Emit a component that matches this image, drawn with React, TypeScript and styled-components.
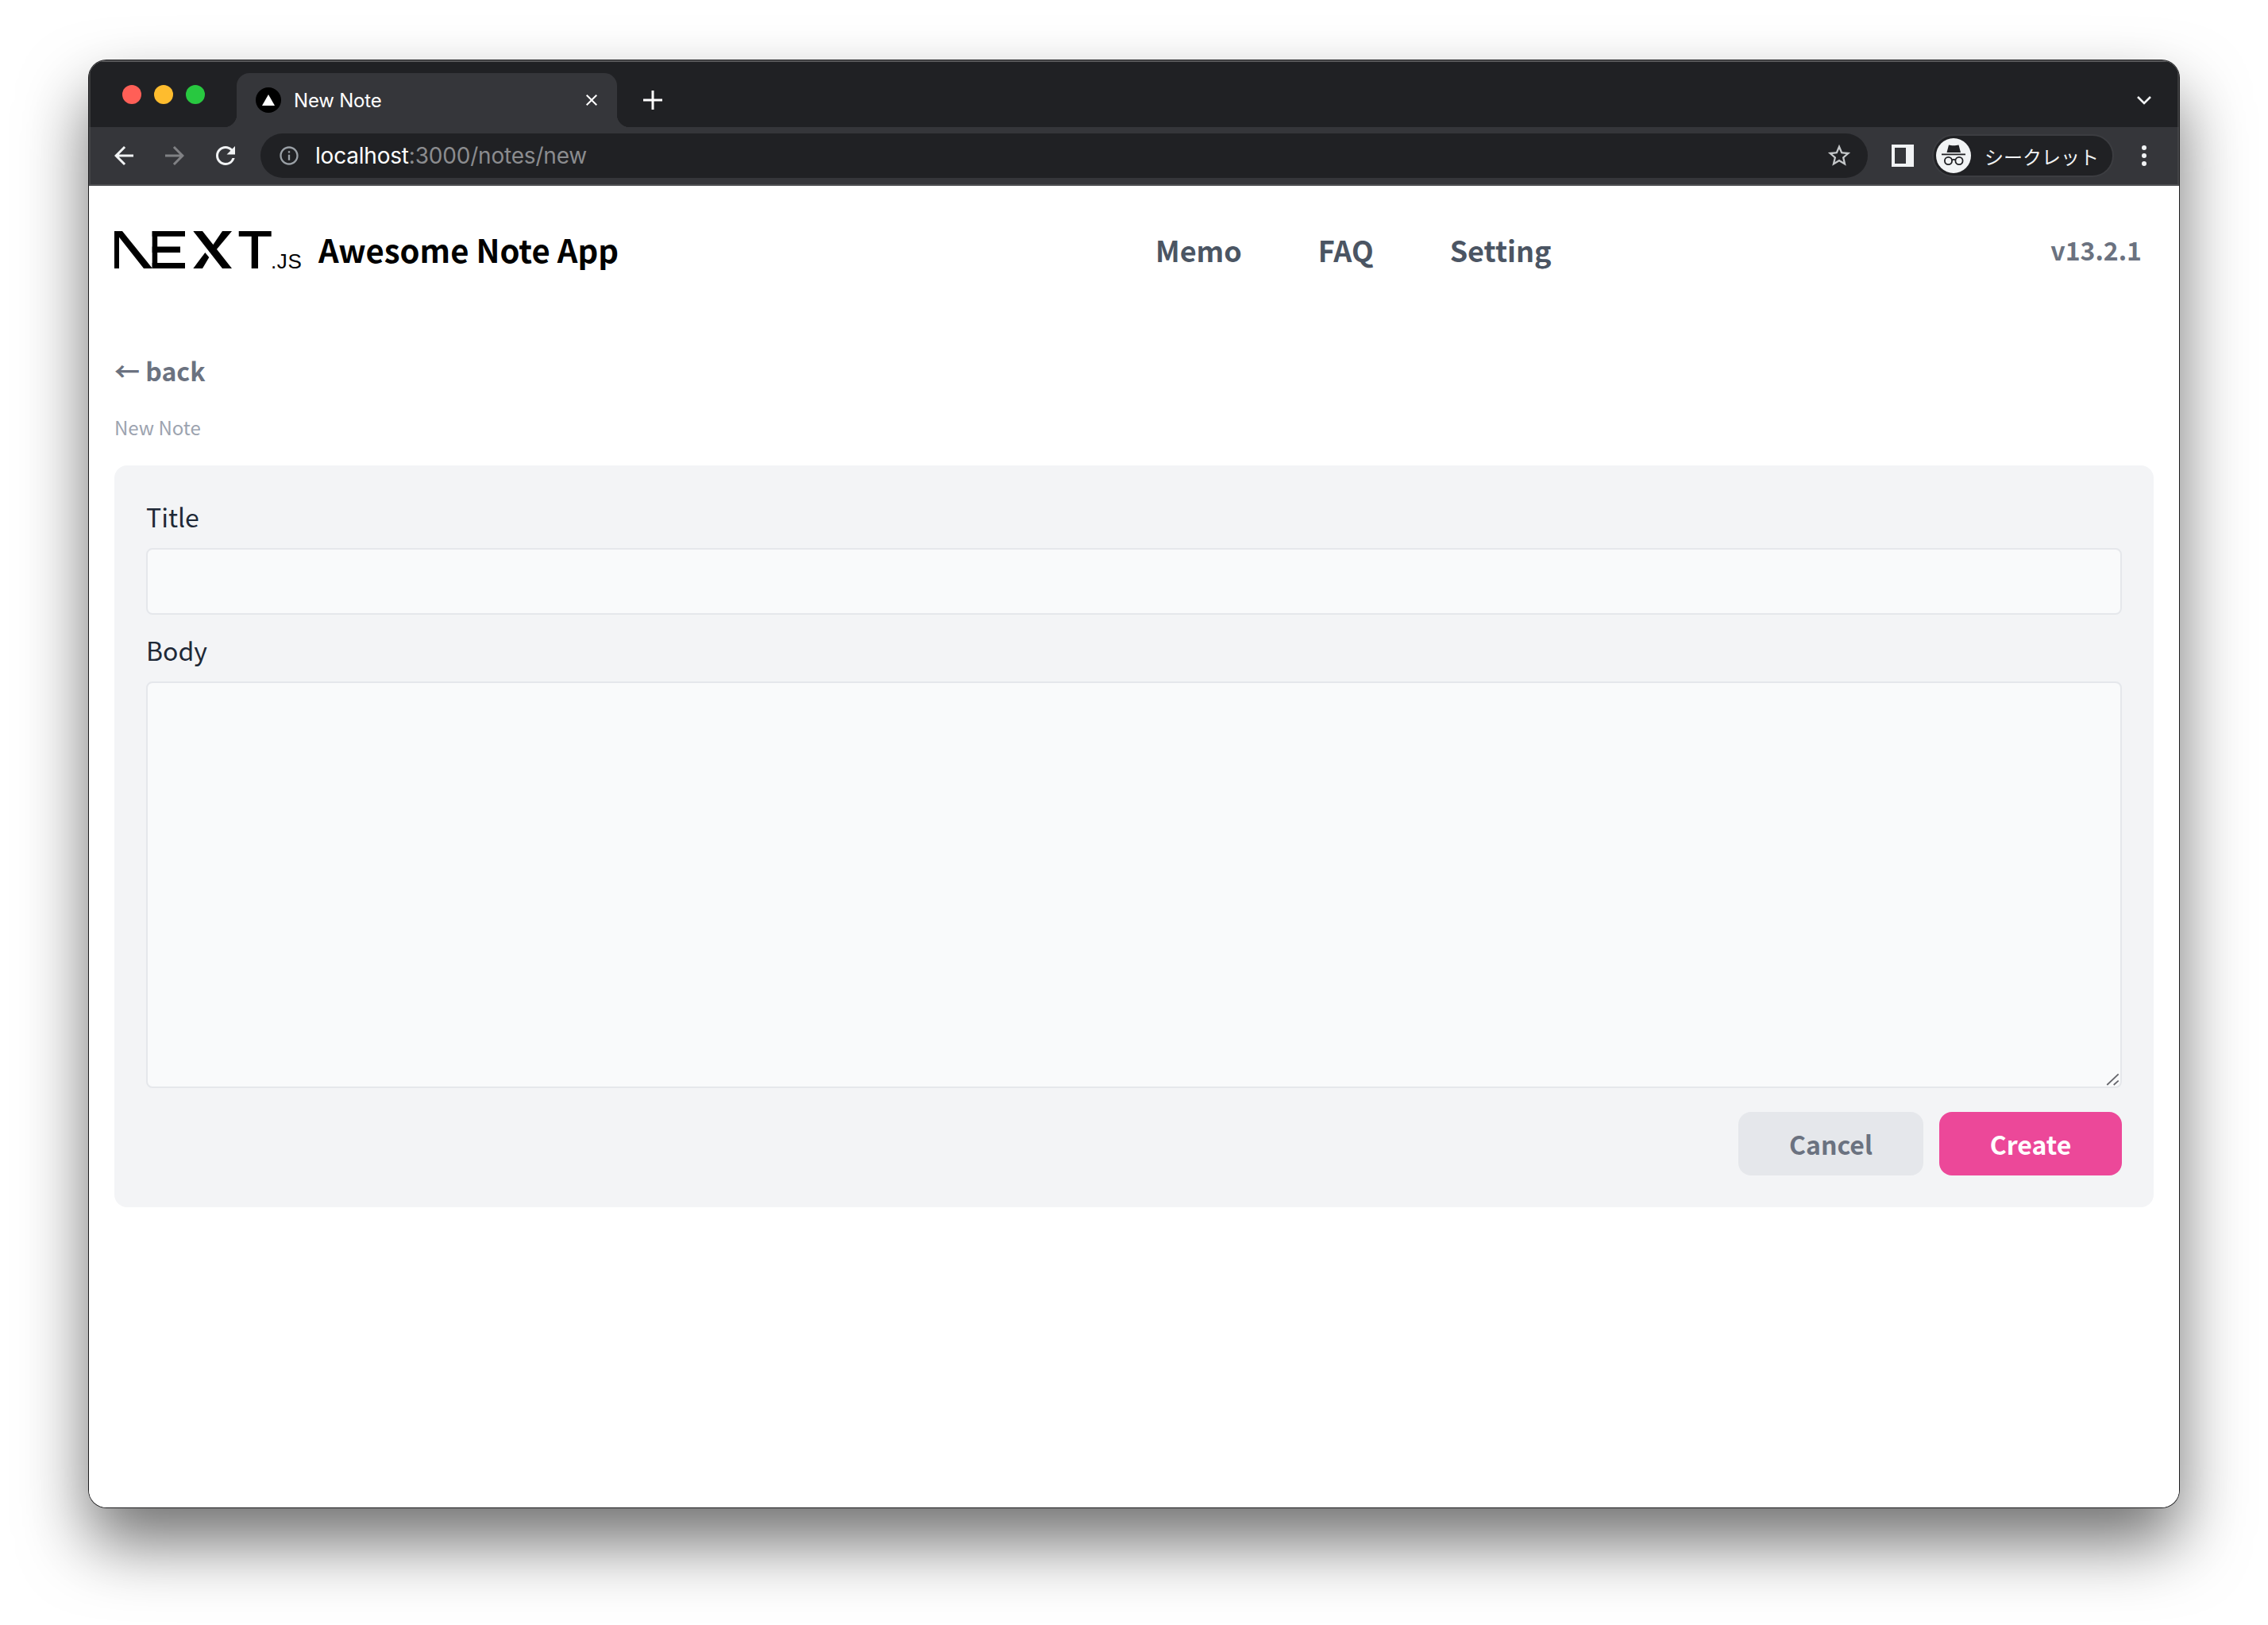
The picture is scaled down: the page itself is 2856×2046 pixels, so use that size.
import React from 'react';
import styled, { createGlobalStyle } from 'styled-components';

const GlobalStyle = createGlobalStyle`
  html, body {
    margin: 0;
    padding: 0;
    background: #ffffff;
  }
  * {
    box-sizing: border-box;
  }
`;

const Stage = styled.div`
  width: 2856px;
  height: 2046px;
  padding: 76px 112px 148px 112px;
  background: #ffffff;
  overflow: hidden;
`;

const BrowserWindow = styled.div`
  display: flex;
  flex-direction: column;
  width: 2632px;
  height: 1822px;
  border-radius: 22px;
  background: #ffffff;
  overflow: hidden;
  box-shadow: 0 0 0 1px #1c1c1e, 0 44px 84px rgba(0, 0, 0, 0.56);
`;

// Chrome frame
const TabStrip = styled.div`
  display: flex;
  align-items: flex-end;
  height: 84px;
  flex: none;
  background: #202124;
  box-shadow: inset 0 2px 0 #58585a, inset 2px 0 0 #3c3d3f, inset -2px 0 0 #3c3d3f;
  padding: 0 0 0 186px;
  position: relative;
`;

const TrafficLights = styled.div`
  position: absolute;
  left: 42px;
  top: 31px;
  display: flex;
  gap: 16px;
`;

const Light = styled.span<{ $color: string }>`
  width: 24px;
  height: 24px;
  border-radius: 50%;
  background: ${props => props.$color};
`;

const Tab = styled.div`
  position: relative;
  display: flex;
  align-items: center;
  width: 479px;
  height: 68px;
  padding: 0 20px 0 24px;
  background: #35363a;
  border-radius: 16px 16px 0 0;
  color: #ffffff;
  font-family: Inter, "Noto Sans", sans-serif;
  font-size: 24px;

  &::before,
  &::after {
    content: '';
    position: absolute;
    bottom: 0;
    width: 16px;
    height: 16px;
  }
  &::before {
    left: -16px;
    background: radial-gradient(circle at 0 0, #202124 16px, #35363a 16.5px);
  }
  &::after {
    right: -16px;
    background: radial-gradient(circle at 100% 0, #202124 16px, #35363a 16.5px);
  }
`;

const Favicon = styled.span`
  display: flex;
  align-items: center;
  justify-content: center;
  width: 32px;
  height: 32px;
  margin-right: 16px;
  border-radius: 50%;
  background: #000000;
`;

const TabTitle = styled.span`
  flex: 1;
  letter-spacing: -0.2px;
`;

const NewTabButton = styled.span`
  display: flex;
  margin: 0 0 22px 33px;
`;

const StripChevron = styled.span`
  display: flex;
  margin-left: auto;
  margin-right: 34px;
  margin-bottom: 27px;
`;

const Toolbar = styled.div`
  display: flex;
  align-items: center;
  height: 74px;
  flex: none;
  padding: 0 0 0 26px;
  background: #35363a;
  border-bottom: 2px solid #4e4f52;
  box-shadow: inset 2px 0 0 #444548, inset -2px 0 0 #444548;
`;

const NavButton = styled.span`
  display: flex;
  justify-content: center;
  width: 36px;
  margin-right: 28px;
  &:nth-child(3) {
    margin-right: 26px;
  }
`;

const Omnibox = styled.div`
  display: flex;
  align-items: center;
  width: 2024px;
  height: 56px;
  padding: 0 19px 0 22px;
  background: #202124;
  border-radius: 28px;
  font-family: Inter, "Noto Sans", sans-serif;
  font-size: 28px;
  color: #ffffff;
`;

const UrlText = styled.span`
  flex: 1;
  margin-left: 19px;
  letter-spacing: -0.2px;
`;

const UrlDim = styled.span`
  color: #8b8c8f;
`;

const PanelIcon = styled.span`
  display: block;
  width: 28px;
  height: 28px;
  margin-left: 30px;
  background: #35363a;
  border-style: solid;
  border-color: #f1f3f4;
  border-width: 4px 10px 4px 4px;
`;

const ProfilePill = styled.div`
  display: flex;
  align-items: center;
  width: 229px;
  height: 54px;
  margin-left: 23px;
  padding: 0 0 0 3px;
  background: #202124;
  border: 2px solid #3c3d41;
  border-radius: 27px;
  color: #f1f3f4;
  font-family: "Noto Sans CJK JP", sans-serif;
  font-size: 24px;
`;

const Avatar = styled.span`
  display: flex;
  width: 44px;
  height: 44px;
  margin-right: 17px;
  border-radius: 50%;
  background: #f1f3f4;
  flex: none;
`;

const Kebab = styled.span`
  display: flex;
  flex-direction: column;
  gap: 4px;
  margin-left: 35px;
`;

const KebabDot = styled.span`
  width: 6px;
  height: 6px;
  border-radius: 50%;
  background: #f1f3f4;
`;

// App page
const Page = styled.main`
  flex: 1;
  display: flex;
  flex-direction: column;
  padding: 0 32px;
  font-family: "Noto Sans CJK JP", "Noto Sans", sans-serif;
  background: #ffffff;
`;

const Header = styled.header`
  display: flex;
  align-items: center;
  height: 100px;
  margin-top: 30px;
`;

const Brand = styled.div`
  display: flex;
  align-items: center;
`;

const Logo = styled.div`
  display: flex;
  align-items: flex-end;
  height: 47px;
`;

const LogoSuffix = styled.span`
  width: 39px;
  margin-left: -1px;
  font-family: "Liberation Sans", sans-serif;
  font-size: 26px;
  line-height: 18px;
  color: #000000;
  letter-spacing: 0.6px;
`;

const BrandTitle = styled.span`
  margin-left: 21px;
  font-size: 40px;
  font-weight: 700;
  color: #000000;
`;

const Nav = styled.nav`
  display: flex;
  gap: 96px;
  margin-left: 676px;
`;

const NavLink = styled.a`
  font-size: 36px;
  font-weight: 700;
  color: #4b5563;
`;

const Version = styled.span`
  margin-left: auto;
  margin-right: 15px;
  font-size: 32px;
  font-weight: 700;
  color: #6b7280;
`;

const BackLink = styled.a`
  margin-top: 78px;
  font-size: 32px;
  line-height: 48px;
  font-weight: 700;
  color: #6b7280;
`;

const PageLabel = styled.div`
  margin-top: 30px;
  font-size: 24px;
  line-height: 36px;
  color: #9ca3af;
`;

const FormCard = styled.form`
  display: flex;
  flex-direction: column;
  height: 934px;
  margin-top: 30px;
  padding: 40px;
  background: #f3f4f6;
  border-radius: 16px;
`;

const FieldLabel = styled.label`
  display: block;
  font-size: 32px;
  line-height: 48px;
  color: #1f2937;
`;

const TextInput = styled.input`
  display: block;
  width: 100%;
  height: 84px;
  margin: 16px 0 20px;
  background: #f9fafb;
  border: 2px solid #e5e7eb;
  border-radius: 8px;
  outline: none;
`;

const BodyField = styled.div`
  position: relative;
  height: 512px;
  margin-top: 16px;
`;

const BodyInput = styled.textarea`
  display: block;
  width: 100%;
  height: 100%;
  background: #f9fafb;
  border: 2px solid #e5e7eb;
  border-radius: 8px;
  outline: none;
  resize: none;
`;

const ResizeGrip = styled.svg`
  position: absolute;
  right: 2px;
  bottom: 2px;
  width: 20px;
  height: 20px;
`;

const Actions = styled.div`
  display: flex;
  justify-content: flex-end;
  gap: 20px;
  margin-top: 30px;
`;

const Button = styled.button<{ $primary?: boolean }>`
  height: 80px;
  padding: 0;
  width: ${props => (props.$primary ? '230px' : '233px')};
  border: none;
  border-radius: 16px;
  font-family: inherit;
  font-size: 32px;
  font-weight: 700;
  background: ${props => (props.$primary ? '#ec4899' : '#e5e7eb')};
  color: ${props => (props.$primary ? '#ffffff' : '#6b7280')};
`;

const IncognitoIcon = () => (
  <svg width="44" height="44" viewBox="0 0 44 44">
    <path d="M16 8.5 C19 9.5 25 9.5 28.5 8.5 L31 18 H13.5 Z" fill="#202124" />
    <rect x="7" y="19.5" width="30" height="1.8" fill="#202124" />
    <circle cx="15.5" cy="28.5" r="4.6" fill="none" stroke="#202124" strokeWidth="1.8" />
    <circle cx="29" cy="28.5" r="4.6" fill="none" stroke="#202124" strokeWidth="1.8" />
    <path d="M20 27.5 C21 26.6 23.5 26.6 24.5 27.5" fill="none" stroke="#202124" strokeWidth="1.6" />
  </svg>
);

const NextMark = () => (
  <svg width="198" height="47" viewBox="0 0 198 47">
    <g fill="#000000">
      <rect x="0" y="0" width="6" height="47" />
      <polygon points="0,0 10,0 48,47 37,47" />
      <rect x="47.7" y="0" width="41.3" height="6.7" />
      <rect x="47.7" y="19.5" width="35.3" height="7.5" />
      <rect x="47.7" y="40" width="41.3" height="7" />
      <rect x="47.7" y="0" width="6.5" height="47" />
      <polygon points="99.3,0 111,0 148,47 136,47" />
      <polygon points="136,0 148,0 124.6,28 119,25" />
      <polygon points="114.3,27 119.3,33 111,47 99.3,47" />
      <rect x="156.7" y="0" width="41" height="6.7" />
      <rect x="172.7" y="0" width="8.3" height="47" />
    </g>
  </svg>
);

export default function App() {
  return (
    <>
      <GlobalStyle />
      <Stage>
        <BrowserWindow>
          <TabStrip>
            <TrafficLights>
              <Light $color="#ff5f57" />
              <Light $color="#febc2e" />
              <Light $color="#28c840" />
            </TrafficLights>
            <Tab>
              <Favicon>
                <svg width="16" height="14" viewBox="0 0 16 14">
                  <polygon points="8,0 16,14 0,14" fill="#ffffff" />
                </svg>
              </Favicon>
              <TabTitle>New Note</TabTitle>
              <svg width="24" height="24" viewBox="0 0 24 24" fill="#ffffff">
                <path d="M19 6.41L17.59 5 12 10.59 6.41 5 5 6.41 10.59 12 5 17.59 6.41 19 12 13.41 17.59 19 19 17.59 13.41 12z" />
              </svg>
            </Tab>
            <NewTabButton>
              <svg width="24" height="24" viewBox="0 0 24 24" fill="#ffffff">
                <path d="M10.5 0h3v10.5H24v3H13.5V24h-3V13.5H0v-3h10.5z" />
              </svg>
            </NewTabButton>
            <StripChevron>
              <svg width="20" height="14" viewBox="0 0 20 14" fill="none" stroke="#f1f3f4" strokeWidth="2.6">
                <path d="M2 3l8 8 8-8" />
              </svg>
            </StripChevron>
          </TabStrip>
          <Toolbar>
            <NavButton>
              <svg width="36" height="36" viewBox="0 0 24 24" fill="#f1f3f4">
                <path d="M20 11H7.83l5.59-5.59L12 4l-8 8 8 8 1.41-1.41L7.83 13H20v-2z" />
              </svg>
            </NavButton>
            <NavButton>
              <svg width="36" height="36" viewBox="0 0 24 24" fill="#808184">
                <path d="M4 11h12.17l-5.59-5.59L12 4l8 8-8 8-1.41-1.41L16.17 13H4v-2z" />
              </svg>
            </NavButton>
            <NavButton>
              <svg width="36" height="36" viewBox="0 0 24 24" fill="#f1f3f4">
                <path d="M17.65 6.35A7.958 7.958 0 0 0 12 4c-4.42 0-7.99 3.58-7.99 8s3.57 8 7.99 8c3.73 0 6.84-2.55 7.73-6h-2.08A5.99 5.99 0 0 1 12 18c-3.31 0-6-2.69-6-6s2.69-6 6-6c1.66 0 3.14.69 4.22 1.78L13 11h7V4l-2.35 2.35z" />
              </svg>
            </NavButton>
            <Omnibox>
              <svg width="28" height="28" viewBox="0 0 24 24" fill="#9aa0a6">
                <path d="M11 7h2v2h-2zm0 4h2v6h-2zm1-9C6.48 2 2 6.48 2 12s4.48 10 10 10 10-4.48 10-10S17.52 2 12 2zm0 18c-4.41 0-8-3.59-8-8s3.59-8 8-8 8 3.59 8 8-3.59 8-8 8z" />
              </svg>
              <UrlText>
                localhost<UrlDim>:3000/notes/new</UrlDim>
              </UrlText>
              <svg width="34" height="34" viewBox="0 0 24 24" fill="#c4c7c9">
                <path d="M22 9.24l-7.19-.62L12 2 9.19 8.63 2 9.24l5.46 4.73L5.82 21 12 17.27 18.18 21l-1.63-7.03L22 9.24zM12 15.4l-3.76 2.27 1-4.28-3.32-2.88 4.38-.38L12 6.1l1.71 4.04 4.38.38-3.32 2.88 1 4.28L12 15.4z" />
              </svg>
            </Omnibox>
            <PanelIcon />
            <ProfilePill>
              <Avatar>
                <IncognitoIcon />
              </Avatar>
              シークレット
            </ProfilePill>
            <Kebab>
              <KebabDot />
              <KebabDot />
              <KebabDot />
            </Kebab>
          </Toolbar>
          <Page>
            <Header>
              <Brand>
                <Logo>
                  <NextMark />
                  <LogoSuffix>.JS</LogoSuffix>
                </Logo>
                <BrandTitle>Awesome Note App</BrandTitle>
              </Brand>
              <Nav>
                <NavLink>Memo</NavLink>
                <NavLink>FAQ</NavLink>
                <NavLink>Setting</NavLink>
              </Nav>
              <Version>v13.2.1</Version>
            </Header>
            <BackLink>← back</BackLink>
            <PageLabel>New Note</PageLabel>
            <FormCard>
              <FieldLabel>Title</FieldLabel>
              <TextInput />
              <FieldLabel>Body</FieldLabel>
              <BodyField>
                <BodyInput />
                <ResizeGrip viewBox="0 0 20 20" fill="none" stroke="#66666c" strokeWidth="1.8">
                  <path d="M3.3 18L17.7 4.3M11.7 18l6-5.3" />
                </ResizeGrip>
              </BodyField>
              <Actions>
                <Button type="button">Cancel</Button>
                <Button type="button" $primary>Create</Button>
              </Actions>
            </FormCard>
          </Page>
        </BrowserWindow>
      </Stage>
    </>
  );
}
